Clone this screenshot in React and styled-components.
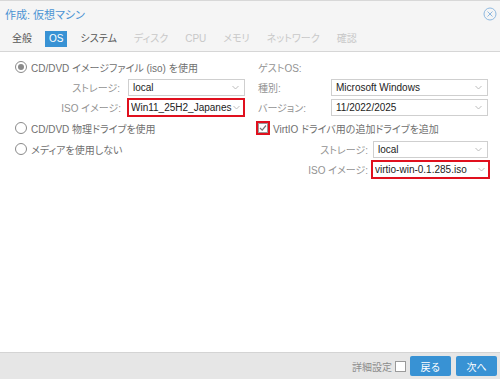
import React from 'react';
import styled, { createGlobalStyle } from 'styled-components';

const GlobalStyle = createGlobalStyle`
  html, body {
    margin: 0;
    padding: 0;
    background: #fff;
  }
  body {
    font-family: "Liberation Sans", "Noto Sans CJK JP", sans-serif;
    font-size: 10px;
    font-feature-settings: "palt";
  }
`;

const Window = styled.div`
  width: 500px;
  height: 379px;
  display: flex;
  flex-direction: column;
  overflow: hidden;
  border-top: 1px solid #d8d8d8;
  box-sizing: border-box;
`;

const Header = styled.div`
  display: flex;
  align-items: center;
  justify-content: space-between;
  height: 26px;
  padding: 0 3px 0 5px;
  background: #f5f5f5;
`;

const Title = styled.div`
  color: #4a93d3;
  font-size: 11px;
`;

const CloseIcon = styled.svg`
  width: 14px;
  height: 14px;
`;

const TabBar = styled.div`
  display: flex;
  align-items: center;
  gap: 9px;
  height: 24px;
  padding: 0 8px;
  background: #f5f5f5;
  border-bottom: 1px solid #d6d6d6;
`;

const Tab = styled.div`
  padding: 2px 4px;
  line-height: 12px;
  font-size: 10px;
  color: ${p => (p.$active ? '#fff' : p.$disabled ? '#c8c8c8' : '#555')};
  background: ${p => (p.$active ? '#3892d4' : 'transparent')};
`;

const Body = styled.div`
  flex: 1;
  display: flex;
  padding: 5px 10px 0 14px;
  background: #fff;
`;

const Column = styled.div`
  display: flex;
  flex-direction: column;
  width: ${p => p.$width}px;
  margin-left: ${p => p.$offset || 0}px;
`;

const Row = styled.div`
  display: flex;
  align-items: center;
  height: ${p => p.$h || 19}px;
  color: #707070;
  padding-left: ${p => p.$indent || 0}px;
`;

const Label = styled.div`
  width: ${p => p.$w}px;
  text-align: ${p => p.$align || 'right'};
  padding-right: ${p => p.$pad ?? 8}px;
  box-sizing: border-box;
  color: #939393;
  flex-shrink: 0;
`;

const Select = styled.div`
  display: flex;
  align-items: center;
  justify-content: space-between;
  width: ${p => p.$w}px;
  height: ${p => (p.$hl ? 19 : 17)}px;
  box-sizing: border-box;
  border: ${p => (p.$hl ? '2px solid #e0101e' : '1px solid #cfcfcf')};
  background: #fff;
  padding: 0 ${p => (p.$hl ? 3 : 5)}px 0 ${p => (p.$hl ? 2 : 4)}px;
  color: #222;
  font-size: 10px;
  white-space: nowrap;
  overflow: hidden;
`;

const SelectText = styled.span`
  overflow: hidden;
  flex: 1;
`;

const Chevron = styled.svg`
  width: 7px;
  height: 5px;
  flex-shrink: 0;
  margin-left: 1px;
`;

const Radio = styled.span`
  display: inline-flex;
  align-items: center;
  justify-content: center;
  width: 10px;
  height: 10px;
  border: 1px solid #8a8a8a;
  border-radius: 50%;
  margin-right: 4px;
  margin-left: 1px;
  &::after {
    content: '';
    width: 6px;
    height: 6px;
    border-radius: 50%;
    background: ${p => (p.$checked ? '#8a8a8a' : 'transparent')};
  }
`;

const RedFrame = styled.span`
  display: inline-flex;
  align-items: center;
  justify-content: center;
  width: 14px;
  height: 14px;
  box-sizing: border-box;
  background: #e0101e;
  margin-right: 3px;
  margin-left: -2px;
`;

const Check = styled.span`
  display: inline-flex;
  align-items: center;
  justify-content: center;
  width: ${p => p.$size || 10}px;
  height: ${p => p.$size || 10}px;
  box-sizing: border-box;
  border: 1px solid #9a9a9a;
  background: #fff;
`;

const Footer = styled.div`
  display: flex;
  align-items: center;
  justify-content: flex-end;
  gap: 5px;
  height: 26px;
  padding: 0 3px 0 0;
  background: #e6e6e6;
  border-top: 1px solid #d4d4d4;
`;

const FooterLabel = styled.span`
  color: #8c8c8c;
  font-size: 10px;
  display: flex;
  align-items: center;
  gap: 3px;
  margin-right: -1px;
`;

const Button = styled.button`
  width: 41px;
  height: 20px;
  border: none;
  border-radius: 2px;
  background: #3892d4;
  color: #fff;
  font-family: inherit;
  font-size: 10px;
  padding: 0;
`;

const ChevronIcon = () => (
  <Chevron viewBox="0 0 7 5">
    <path d="M0.5 1 L3.5 4 L6.5 1" fill="none" stroke="#b5b5b5" strokeWidth="0.9" />
  </Chevron>
);

const Field = ({ w, hl, children }) => (
  <Select $w={w} $hl={hl}>
    <SelectText>{children}</SelectText>
    <ChevronIcon />
  </Select>
);

const tabs = [
  { name: '全般' },
  { name: 'OS', active: true },
  { name: 'システム' },
  { name: 'ディスク', disabled: true },
  { name: 'CPU', disabled: true },
  { name: 'メモリ', disabled: true },
  { name: 'ネットワーク', disabled: true },
  { name: '確認', disabled: true },
];

export default function App() {
  return (
    <>
      <GlobalStyle />
      <Window>
        <Header>
          <Title>作成: 仮想マシン</Title>
          <CloseIcon viewBox="0 0 14 14">
            <circle cx="7" cy="7" r="6" fill="none" stroke="#8fb9e0" strokeWidth="1" />
            <path d="M4.5 4.5 L9.5 9.5 M9.5 4.5 L4.5 9.5" stroke="#8fb9e0" strokeWidth="1" />
          </CloseIcon>
        </Header>
        <TabBar>
          {tabs.map(t => (
            <Tab key={t.name} $active={t.active} $disabled={t.disabled}>
              {t.name}
            </Tab>
          ))}
        </TabBar>
        <Body>
          <Column $width={231}>
            <Row $h={20}>
              <Radio $checked />
              CD/DVD イメージファイル (iso) を使用
            </Row>
            <Row $h={20}>
              <Label $w={114}>ストレージ:</Label>
              <Field w={117}>local</Field>
            </Row>
            <Row $h={20}>
              <Label $w={113} $pad={6}>ISO イメージ:</Label>
              <Field w={119} hl>Win11_25H2_Japanes</Field>
            </Row>
            <Row $h={22}>
              <Radio />
              CD/DVD 物理ドライブを使用
            </Row>
            <Row $h={20}>
              <Radio />
              メディアを使用しない
            </Row>
          </Column>
          <Column $width={232} $offset={13}>
            <Row $h={20}>
              <Label $w={73} $align="left">ゲストOS:</Label>
            </Row>
            <Row $h={20}>
              <Label $w={73} $align="left">種別:</Label>
              <Field w={157}>Microsoft Windows</Field>
            </Row>
            <Row $h={20}>
              <Label $w={73} $align="left">バージョン:</Label>
              <Field w={157}>11/2022/2025</Field>
            </Row>
            <Row $h={22}>
              <RedFrame>
                <Check $size={10}>
                  <svg width="8" height="8" viewBox="0 0 8 8">
                    <path d="M1 4 L3.2 6.2 L7 1.5" fill="none" stroke="#777" strokeWidth="1.2" />
                  </svg>
                </Check>
              </RedFrame>
              VirtIO ドライバ用の追加ドライブを追加
            </Row>
            <Row $h={20}>
              <Label $w={115} $pad={5}>ストレージ:</Label>
              <Field w={115}>local</Field>
            </Row>
            <Row $h={21}>
              <Label $w={113} $pad={3}>ISO イメージ:</Label>
              <Field w={119} hl>virtio-win-0.1.285.iso</Field>
            </Row>
          </Column>
        </Body>
        <Footer>
          <FooterLabel>
            詳細設定
            <Check $size={11} />
          </FooterLabel>
          <Button>戻る</Button>
          <Button>次へ</Button>
        </Footer>
      </Window>
    </>
  );
}
